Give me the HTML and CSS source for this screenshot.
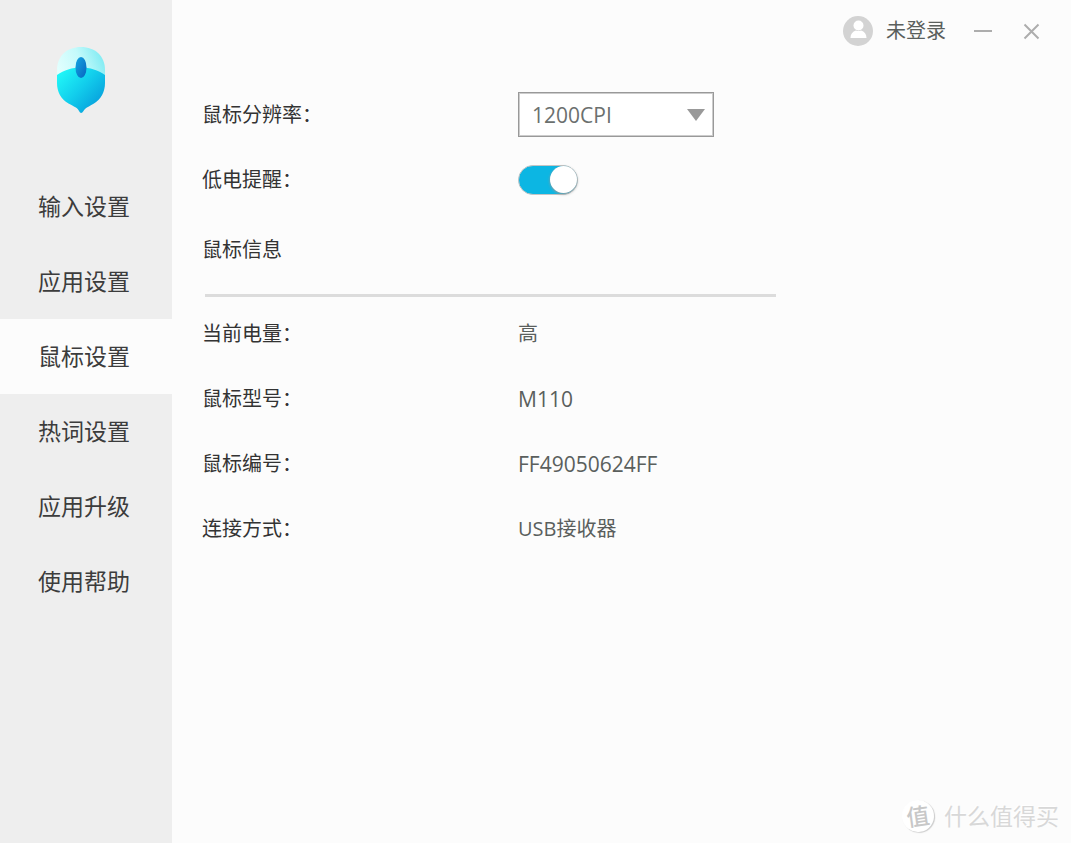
FILE: index.html
```html
<!DOCTYPE html>
<html lang="zh-CN">
<head>
<meta charset="utf-8">
<meta name="viewport" content="width=device-width, initial-scale=1">
<title>鼠标设置</title>
<link rel="stylesheet" href="styles.css">
</head>
<body>
<div class="app">
  <aside class="sidebar">
    <svg class="logo" viewBox="0 0 50 68" aria-hidden="true">
      <defs>
        <linearGradient id="shell" x1="0" y1="0.6" x2="1" y2="0.3">
          <stop offset="0" stop-color="#e2fffe"/>
          <stop offset="0.5" stop-color="#c4fafb"/>
          <stop offset="1" stop-color="#7beaf2"/>
        </linearGradient>
        <linearGradient id="body" x1="0.1" y1="0.1" x2="0.9" y2="0.8">
          <stop offset="0" stop-color="#20f5f7"/>
          <stop offset="0.5" stop-color="#12cdec"/>
          <stop offset="1" stop-color="#07a0dc"/>
        </linearGradient>
        <linearGradient id="wheel" x1="0" y1="0" x2="1" y2="1">
          <stop offset="0" stop-color="#14a7e2"/>
          <stop offset="1" stop-color="#0763c0"/>
        </linearGradient>
      </defs>
      <path fill="url(#shell)" d="M1 34V24C1 10 11 1 25 1s24 9 24 23v10z"/>
      <path fill="url(#body)" d="M1 29C8 24 16 21.500 25 21.500S42 24 49 29V37C49 46 45 53 38 57.500 33 60.500 29 62 27.500 65Q25 69 23 65C22 62 18 60.500 12.500 57.500 5 53 1 46 1 37z"/>
      <ellipse cx="25" cy="21.500" rx="5.500" ry="10.500" fill="url(#wheel)"/>
    </svg>
    <nav class="nav">
      <a class="nav-item" href="#input">输入设置</a>
      <a class="nav-item" href="#apps">应用设置</a>
      <a class="nav-item active" href="#mouse" aria-current="page">鼠标设置</a>
      <a class="nav-item" href="#words">热词设置</a>
      <a class="nav-item" href="#upgrade">应用升级</a>
      <a class="nav-item" href="#help">使用帮助</a>
    </nav>
  </aside>
  <div class="content">
    <header class="titlebar">
      <button class="account" type="button">
        <svg class="avatar" viewBox="0 0 30 30" aria-hidden="true">
          <circle cx="15" cy="15" r="15" fill="#d3d3d3"/>
          <circle cx="15.500" cy="9.500" r="5" fill="#fff"/>
          <path fill="#fff" d="M7.500 22c0-4 2-6.500 5.500-7.500q2.500 1 5 0c3.500 1 5.500 3.500 5.500 7.500z"/>
        </svg>
        <span>未登录</span>
      </button>
      <button class="window-button" type="button" aria-label="最小化">
        <svg viewBox="0 0 20 20" aria-hidden="true"><path d="M0 10H18"/></svg>
      </button>
      <button class="window-button" type="button" aria-label="关闭">
        <svg viewBox="0 0 20 20" aria-hidden="true"><path d="M2.500 3.500l14 14M16.500 3.500l-14 14"/></svg>
      </button>
    </header>
    <main class="settings">
      <div class="row">
        <label for="cpi">鼠标分辨率：</label>
        <div class="picker">
          <select id="cpi" class="latin"><option>1200CPI</option></select>
          <svg class="arrow" viewBox="0 0 18 12" aria-hidden="true"><path d="M0 0h18L9 12z"/></svg>
        </div>
      </div>
      <div class="row">
        <label for="battery">低电提醒：</label>
        <input id="battery" class="switch" type="checkbox" role="switch" checked>
      </div>
      <h2 class="heading">鼠标信息</h2>
      <dl class="info">
        <div class="row"><dt>当前电量：</dt><dd>高</dd></div>
        <div class="row"><dt>鼠标型号：</dt><dd class="latin">M110</dd></div>
        <div class="row"><dt>鼠标编号：</dt><dd class="latin">FF49050624FF</dd></div>
        <div class="row"><dt>连接方式：</dt><dd>USB接收器</dd></div>
      </dl>
    </main>
    <footer class="watermark">
      <span class="seal">值</span>
      <span>什么值得买</span>
    </footer>
  </div>
</div>
</body>
</html>
```
FILE: styles.css
```css
* {
  box-sizing: border-box;
}

body {
  margin: 0;
  background: #fcfcfc;
  color: #333;
  font: 20px/28px "Open Sans", "Noto Sans CJK SC", sans-serif;
}

button,
select {
  font: inherit;
  color: inherit;
}

button {
  padding: 0;
  border: 0;
  background: none;
}

.app {
  display: flex;
  min-height: 100vh;
}

.sidebar {
  flex: 0 0 172px;
  padding-top: 46px;
  background: #eee;
}

.logo {
  display: block;
  width: 50px;
  height: 68px;
  margin: 0 auto 55px 56px;
}

.nav-item {
  display: block;
  padding-left: 38px;
  color: #3c3c3c;
  font-size: 23px;
  line-height: 75px;
  text-decoration: none;
}

.nav-item.active {
  background: #fcfcfc;
}

.content {
  flex: 1;
  display: flex;
  flex-direction: column;
  min-width: 0;
}

.titlebar {
  display: flex;
  justify-content: flex-end;
  align-items: center;
  gap: 28px;
  height: 62px;
  padding-right: 29px;
}

.account {
  display: flex;
  align-items: center;
  gap: 13px;
  color: #5a5f5d;
}

.avatar {
  width: 30px;
  height: 30px;
}

.window-button {
  width: 20px;
  height: 20px;
}

.window-button svg {
  display: block;
  fill: none;
  stroke: #adadad;
  stroke-width: 2;
}

.settings {
  flex: 1;
  padding: 20px 30px 0;
}

.row {
  display: grid;
  grid-template-columns: 316px 1fr;
  align-items: center;
  min-height: 65px;
}

.picker {
  position: relative;
  width: 196px;
}

.picker select {
  display: block;
  width: 100%;
  height: 45px;
  padding: 0 40px 0 13px;
  border: 1px solid #999;
  border-radius: 0;
  background: #fff;
  box-shadow: inset 0 0 0 1px #ccc;
  color: #6b706e;
  appearance: none;
}

.arrow {
  position: absolute;
  top: 17px;
  right: 9px;
  width: 18px;
  height: 12px;
  fill: #999;
  pointer-events: none;
}

.switch {
  appearance: none;
  display: flex;
  justify-content: flex-end;
  align-items: center;
  width: 60px;
  height: 30px;
  margin: 0;
  border: 1px solid #c4c4c4;
  border-radius: 15px;
  background: #0cb6e3;
}

.switch::before {
  content: "";
  width: 27px;
  height: 27px;
  border-radius: 50%;
  background: #fff;
  box-shadow: 0 1px 3px #999;
}

.switch:not(:checked) {
  justify-content: flex-start;
  background: #ccc;
}

.heading {
  max-width: 574px;
  margin: 0;
  padding: 24px 0 30px;
  font-size: 20px;
  font-weight: 400;
}

.info {
  max-width: 571px;
  margin: 0 0 0 3px;
  border-top: 3px solid #dcdcdc;
  padding-top: 4px;
}

.info .row {
  margin-left: -3px;
}

.info dd {
  margin: 0;
  color: #5a5f5d;
}

.info .latin,
.picker .latin {
  font-size: 21px;
}

.watermark {
  display: flex;
  justify-content: flex-end;
  align-items: center;
  gap: 10px;
  padding: 0 12px 11px;
  color: #d8d8d8;
  font-size: 23px;
  line-height: 32px;
  text-shadow: -1px -1px 0 #fff;
}

.seal {
  width: 32px;
  height: 32px;
  border-radius: 50%;
  background: #fff;
  box-shadow: 1px 1px 1px #ccc;
  color: #c8c8c8;
  text-align: center;
  font-weight: 500;
  transform: rotate(-8deg);
}
```
